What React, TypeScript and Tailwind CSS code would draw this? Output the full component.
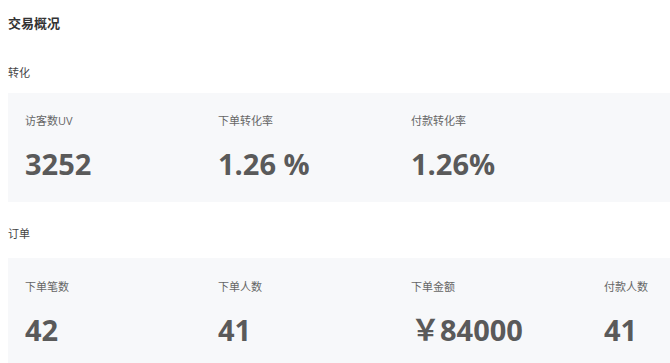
import React from "react";

const font = { fontFamily: '"Open Sans", "Noto Sans CJK SC", sans-serif' };

function Stat({ label, value, last }: { label: string; value: string; last?: boolean }) {
  return (
    <div className={last ? "shrink-0" : "w-[193px] shrink-0"}>
      <div className="text-[11px] leading-[16px] text-[#666]">{label}</div>
      <div className="mt-[20px] text-[29px] leading-[30px] font-bold text-[#5a5a5a] whitespace-nowrap">{value}</div>
    </div>
  );
}

export default function App() {
  return (
    <div className="w-[670px] h-[363px] overflow-hidden bg-white pl-2" style={font}>
      <div className="pt-[13px] text-[13px] leading-[20px] font-bold text-[#333]">交易概况</div>
      <div className="mt-[32px] text-[11px] leading-[16px] text-[#444]">转化</div>
      <div className="mt-[12px] h-[109px] bg-[#f7f8fa] pl-[17px] pt-[20px] flex">
        <Stat label="访客数UV" value="3252" />
        <Stat label="下单转化率" value="1.26 %" />
        <Stat label="付款转化率" value="1.26%" last />
      </div>
      <div className="mt-[24px] text-[11px] leading-[16px] text-[#444]">订单</div>
      <div className="mt-[16px] h-[120px] bg-[#f7f8fa] pl-[17px] pt-[21px] flex">
        <Stat label="下单笔数" value="42" />
        <Stat label="下单人数" value="41" />
        <Stat label="下单金额" value="￥84000" />
        <Stat label="付款人数" value="41" last />
      </div>
    </div>
  );
}
